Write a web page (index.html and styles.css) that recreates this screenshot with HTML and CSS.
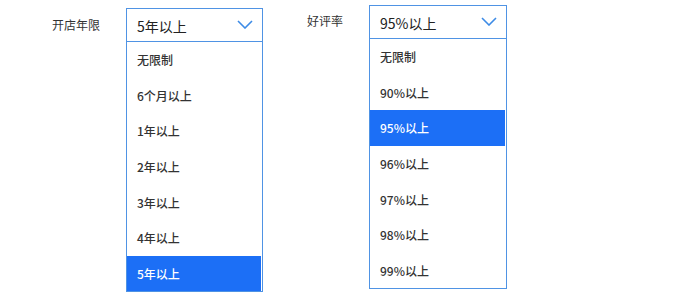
FILE: index.html
```html
<!DOCTYPE html>
<html lang="zh">
<head>
<meta charset="utf-8">
<link rel="stylesheet" href="styles.css">
</head>
<body>
<div class="page">
  <div class="field field-a">
    <div class="label">开店年限</div>
    <div class="select">
      <div class="head">
        <span>5年以上</span>
        <svg class="chev" width="16" height="9" viewBox="0 0 16 9"><path d="M1 1 L8 8 L15 1" fill="none" stroke="#3d8be6" stroke-width="1.6"/></svg>
      </div>
      <ul class="list">
        <li>无限制</li>
        <li>6个月以上</li>
        <li>1年以上</li>
        <li>2年以上</li>
        <li>3年以上</li>
        <li>4年以上</li>
        <li class="on">5年以上</li>
      </ul>
    </div>
  </div>
  <div class="field field-b">
    <div class="label">好评率</div>
    <div class="select">
      <div class="head">
        <span>95%以上</span>
        <svg class="chev" width="16" height="9" viewBox="0 0 16 9"><path d="M1 1 L8 8 L15 1" fill="none" stroke="#3d8be6" stroke-width="1.6"/></svg>
      </div>
      <ul class="list">
        <li>无限制</li>
        <li>90%以上</li>
        <li class="on">95%以上</li>
        <li>96%以上</li>
        <li>97%以上</li>
        <li>98%以上</li>
        <li>99%以上</li>
      </ul>
    </div>
  </div>
</div>
</body>
</html>
```
FILE: styles.css
```css
html, body {
  margin: 0;
  padding: 0;
  background: #fff;
}
body {
  font-family: "Noto Sans CJK SC", "Liberation Sans", sans-serif;
  color: #333;
}
.page {
  display: flex;
  align-items: flex-start;
  padding-left: 52px;
}
.field {
  display: flex;
  align-items: flex-start;
}
.field-a {
  margin-top: 8px;
  width: 255px;
}
.field-b {
  margin-top: 5px;
  margin-left: 0;
}
.label {
  font-size: 12px;
  line-height: 17px;
  margin-top: 8px;
  color: #333;
}
.field-a .label { width: 74px; }
.field-b .label { width: 62px; margin-top: 7px; }
.field-b { margin-left: 0; }
.select {
  border: 1px solid #4f93e4;
  background: #fff;
}
.field-a .select { width: 135px; }
.field-b .select { width: 136px; }
.field-b { padding-left: 0; }
.field-a { margin-right: 0; }
.head {
  height: 32px;
  border-bottom: 1px solid #4f93e4;
  display: flex;
  align-items: center;
  justify-content: space-between;
  padding: 0 9px 0 10px;
  font-size: 14px;
  color: #222;
}
.head span { padding-top: 1px; }
.chev { display: block; margin-top: -2px; }
.list {
  list-style: none;
  margin: 0;
  padding: 0 1px 0 0;
}
.list li {
  height: 35.6px;
  display: flex;
  align-items: center;
  padding-left: 10px;
  font-size: 12px;
  font-weight: 500;
  color: #333;
}
.list li.on {
  background: #1c6ff6;
  color: #fff;
}
```
